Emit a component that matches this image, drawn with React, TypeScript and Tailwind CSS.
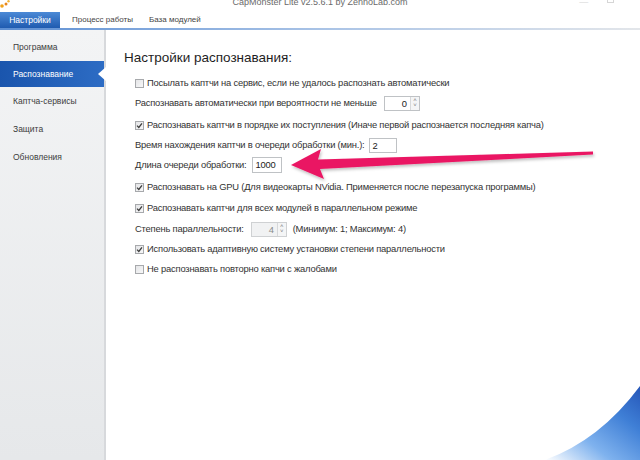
import React from "react";

function Check({ checked }: { checked?: boolean }) {
  return (
    <span className="mr-[3px] flex h-[9px] w-[9px] shrink-0 items-center justify-center border border-[#a7a9ac] bg-gradient-to-br from-[#e4e5e7] to-[#f7f7f8]">
      {checked && (
        <svg width="7" height="7" viewBox="0 0 7 7">
          <path d="M1 3.6 L2.8 5.4 L6 1.3" fill="none" stroke="#3d3d3d" strokeWidth="1.3" />
        </svg>
      )}
    </span>
  );
}

function Spin({ value, disabled, w }: { value: string; disabled?: boolean; w: string }) {
  return (
    <div className={`ml-[7px] flex h-[15px] ${w} border ${disabled ? "border-[#cfd1d3] bg-[#f1f2f3] text-[#8a8a8a]" : "border-[#bfc2c5] bg-white text-[#222]"}`}>
      <span className="flex-1 pr-[3px] text-right leading-[13px]">{value}</span>
      <span className="flex w-[9px] flex-col items-center justify-center border-l border-[#d6d8da] bg-[#f4f5f6] text-[6px] leading-[5px] text-[#777]">
        <span>˄</span>
        <span>˅</span>
      </span>
    </div>
  );
}

const sideItems = ["Программа", "Распознавание", "Каптча-сервисы", "Защита", "Обновления"];

export default function App() {
  return (
    <div className="relative h-[460px] w-[640px] overflow-hidden bg-white font-['Liberation_Sans',Arial,sans-serif] text-[9.4px] tracking-[-0.2px] text-[#333]">
      {/* title bar */}
      <div className="relative flex h-[12px] justify-center overflow-hidden">
        <svg className="absolute left-0 top-0" width="10" height="9" viewBox="0 0 10 9">
          <circle cx="2" cy="6" r="1.8" fill="#f0a21a" />
          <circle cx="6" cy="4" r="1.5" fill="#e8861c" />
          <circle cx="8.5" cy="1.2" r="1.2" fill="#f2b63a" />
        </svg>
        <div className="mt-[-3px] h-[11px] text-[9px] leading-[10px] tracking-normal text-[#6a6a6a]">
          CapMonster Lite v2.5.6.1 by ZennoLab.com
        </div>
        <div className="absolute right-[26px] top-[-4px] flex gap-[19px] text-[9px] text-[#d6d6d6]">
          <span>—</span>
          <span className="mt-[2px] h-[5px] w-[7px] border border-t-0 border-[#d6d6d6]"></span>
        </div>
      </div>

      {/* tabs */}
      <div className="flex h-[16px] items-stretch text-[8px] tracking-normal">
        <div className="flex w-[60px] items-center justify-center bg-gradient-to-b from-[#4c8ad6] to-[#1f5bb0] text-[8.5px] text-white">
          Настройки
        </div>
        <div className="ml-[12px] flex items-center text-[#444]">Процесс работы</div>
        <div className="ml-[16px] flex items-center text-[#444]">База модулей</div>
      </div>
      <div className="h-[2px] bg-gradient-to-r from-[#5d8fd3] via-[#a9c3e6] to-[#e3e6ea]"></div>

      <div className="flex h-[430px]">
        {/* sidebar */}
        <div className="w-[106px] shrink-0 border-r-2 border-[#d7d9dc] bg-gradient-to-b from-[#f3f4f5] to-[#e6e8ea] pt-[3px] text-[8.5px] tracking-normal">
          {sideItems.map((item, i) =>
            i === 1 ? (
              <div
                key={item}
                className="relative flex h-[26px] items-center bg-gradient-to-r from-[#1a55ad] to-[#2d6cc4] pl-[13px] text-white"
              >
                {item}
                <span className="absolute right-[-2px] top-[6px] h-0 w-0 border-y-[7px] border-r-[8px] border-y-transparent border-r-white"></span>
              </div>
            ) : (
              <div key={item} className="flex h-[28px] items-center pl-[13px] text-[#3d3d3d]">
                {item}
              </div>
            )
          )}
        </div>

        {/* content */}
        <div className="flex-1 pl-[18px]">
          <div className="mt-[19px] text-[13.5px] leading-[18px] tracking-normal text-[#1e1e1e]">
            Настройки распознавания:
          </div>
          <div className="ml-[11px] mt-[6px] flex flex-col">
            <div className="flex h-[20px] items-center">
              <Check />
              Посылать каптчи на сервис, если не удалось распознать автоматически
            </div>
            <div className="flex h-[20px] items-center">
              Распознавать автоматически при вероятности не меньше
              <Spin value="0" w="w-[36px]" />
            </div>
            <div className="mt-[2px] flex h-[20px] items-center">
              <Check checked />
              Распознавать каптчи в порядке их поступления (Иначе первой распознается последняя капча)
            </div>
            <div className="flex h-[20px] items-center">
              Время нахождения каптчи в очереди обработки (мин.):
              <span className="ml-[4px] h-[15px] w-[28px] border border-[#bfc2c5] pl-[3px] leading-[13px] text-[#222]">2</span>
            </div>
            <div className="flex h-[20px] items-center">
              Длина очереди обработки:
              <span className="ml-[5px] h-[16px] w-[30px] border border-[#bfc2c5] pl-[3px] leading-[14px] text-[#222]">1000</span>
            </div>
            <div className="mt-[2px] flex h-[20px] items-center">
              <Check checked />
              Распознавать на GPU (Для видеокарты NVidia. Применяется после перезапуска программы)
            </div>
            <div className="mt-[1px] flex h-[20px] items-center">
              <Check checked />
              Распознавать каптчи для всех модулей в параллельном режиме
            </div>
            <div className="mt-[1px] flex h-[20px] items-center">
              Степень параллельности:
              <Spin value="4" disabled w="w-[36px]" />
              <span className="ml-[6px]">(Минимум: 1; Максимум: 4)</span>
            </div>
            <div className="flex h-[20px] items-center">
              <Check checked />
              Использовать адаптивную систему установки степени параллельности
            </div>
            <div className="flex h-[20px] items-center">
              <Check />
              Не распознавать повторно капчи с жалобами
            </div>
          </div>
        </div>
      </div>

      {/* pink arrow overlay */}
      <svg className="pointer-events-none absolute left-0 top-0" width="640" height="460" viewBox="0 0 640 460">
        <defs>
          <filter id="sh" x="-10%" y="-50%" width="120%" height="200%">
            <feDropShadow dx="1" dy="2" stdDeviation="1.5" floodColor="#000" floodOpacity="0.25" />
          </filter>
          <linearGradient id="sw" x1="0" y1="1" x2="1" y2="0">
            <stop offset="0" stopColor="#ffffff" />
            <stop offset="0.35" stopColor="#7fb2ee" />
            <stop offset="0.7" stopColor="#3f7fd6" />
            <stop offset="1" stopColor="#2556b8" />
          </linearGradient>
        </defs>
        <path
          d="M291 165 L321 149 L318 159.5 L593 151.5 L593 154.5 L320 169 L324 179 Z"
          fill="#ea1763"
          filter="url(#sh)"
        />
        <path d="M545 460 Q 600 440 640 386 L640 460 Z" fill="url(#sw)" />
      </svg>
    </div>
  );
}
